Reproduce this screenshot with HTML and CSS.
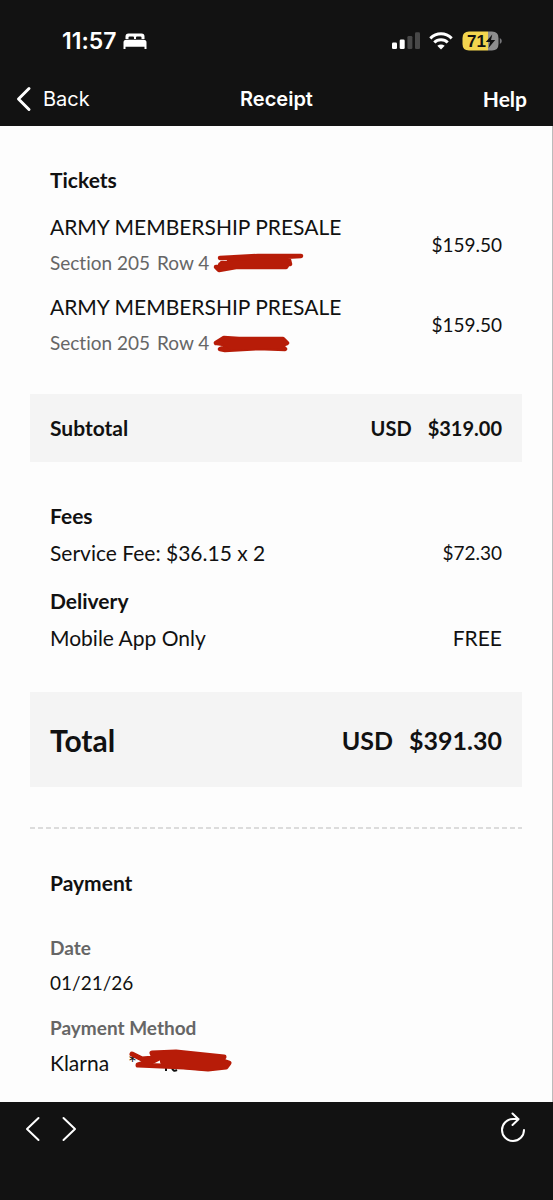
FILE: index.html
```
<!DOCTYPE html>
<html lang="en">
<head>
<meta charset="utf-8">
<meta name="viewport" content="width=device-width, initial-scale=1">
<title>Receipt</title>
<link rel="stylesheet" href="styles.css">
</head>
<body>
<header class="top">
  <div class="status">
    <div class="status-left">
      <span class="clock">11:57</span>
      <svg width="24" height="18" viewBox="0 0 24 18" fill="#fff" aria-hidden="true">
        <path d="M2.500 7V4.500Q2.500 1.500 5.500 1.500H18.500Q21.500 1.500 21.500 4.500V7H18.500V5.500Q18.500 4.500 17.500 4.500H14Q13 4.500 13 5.500V7H11V5.500Q11 4.500 10 4.500H6.500Q5.500 4.500 5.500 5.500V7Z"/>
        <path d="M.5 17V10.500Q.5 7.800 3.200 7.800H20.800Q23.500 7.800 23.500 10.500V17H21.500V14.800H2.500V17Z"/>
      </svg>
    </div>
    <div class="status-right">
      <svg width="28" height="18" viewBox="0 0 28 18" aria-hidden="true">
        <g fill="#fff"><rect y="10.500" width="5" height="6.500" rx="1.300"/><rect x="7.700" y="7.500" width="5" height="9.500" rx="1.300"/></g>
        <g fill="#484848"><rect x="15.400" y="4" width="5" height="13" rx="1.300"/><rect x="23" y=".3" width="5" height="16.700" rx="1.300"/></g>
      </svg>
      <svg width="24" height="18" viewBox="0 0 24 18" fill="none" stroke="#fff" stroke-width="3" aria-hidden="true">
        <path d="M1.300 6.300Q6 1.800 12 1.800T22.700 6.300"/>
        <path d="M5.300 10.500Q8 7.800 12 7.800T18.700 10.500"/>
        <path d="M8.300 13.800Q12 11 15.700 13.800L12 17.500Z" fill="#fff" stroke="none"/>
      </svg>
      <svg class="battery" width="40" height="20" viewBox="0 0 40 20" role="img" aria-label="Battery 71 percent, charging">
        <path d="M7 .5H26V19.500H7Q.5 19.500 .5 13V7Q.5 .5 7 .5Z" fill="#f3d54e"/>
        <path d="M26 .5H30Q36.500 .5 36.500 7V13Q36.500 19.500 30 19.500H26Z" fill="#8d8d8d"/>
        <path d="M37.800 7Q39.800 8 39.800 10T37.800 13Z" fill="#77777a"/>
        <text x="5" y="16">71</text>
        <path d="M30.300 3.500L23.800 11H28L26.500 17L33.200 9H29Z" fill="#111"/>
      </svg>
    </div>
  </div>
  <nav class="nav">
    <button class="back" type="button">
      <svg width="16" height="26" viewBox="0 0 16 26" fill="none" stroke="#fff" stroke-width="3" stroke-linecap="round" stroke-linejoin="round" aria-hidden="true"><path d="M13 2.500L2.500 13L13 23.500"/></svg>
      <span>Back</span>
    </button>
    <h1 class="title">Receipt</h1>
    <button class="help" type="button">Help</button>
  </nav>
</header>

<main class="receipt">
  <section class="block">
    <h2 class="heading">Tickets</h2>
    <ul class="tickets">
      <li class="ticket">
        <div class="ticket-info">
          <p>ARMY MEMBERSHIP PRESALE</p>
          <p class="seat"><span class="seat-text"><span>Section 205</span><span>Row 4</span></span>
            <svg width="92" height="22" viewBox="0 0 92 22" fill="none" stroke="#b71c08" stroke-width="4.500" stroke-linecap="round" stroke-linejoin="round" aria-hidden="true">
              <path d="M7 6L45 4L88 4L70 5L9 11L76 8L77 12L3 15L6 18L23 15H73L75 12L16 8"/>
              <path d="M8 13L70 8L73 13L20 13" stroke-width="6"/>
            </svg>
          </p>
        </div>
        <span class="amount">$159.50</span>
      </li>
      <li class="ticket">
        <div class="ticket-info">
          <p>ARMY MEMBERSHIP PRESALE</p>
          <p class="seat"><span class="seat-text"><span>Section 205</span><span>Row 4</span></span>
            <svg width="92" height="22" viewBox="0 0 92 22" fill="none" stroke="#b71c08" stroke-width="4.500" stroke-linecap="round" stroke-linejoin="round" aria-hidden="true">
              <path d="M3 11L11 6L26 7L70 7L74 11L68 13L72 17L45 16L12 18L7 17L18 13L4 11"/>
              <path d="M12 9H68V13L18 15L13 11H64" stroke-width="6"/>
            </svg>
          </p>
        </div>
        <span class="amount">$159.50</span>
      </li>
    </ul>
  </section>

  <div class="band">
    <span>Subtotal</span>
    <span class="money"><span>USD</span><span>$319.00</span></span>
  </div>

  <section class="block charges">
    <div>
      <h2 class="heading">Fees</h2>
      <p class="line"><span>Service Fee: $36.15 x 2</span><span class="amount">$72.30</span></p>
    </div>
    <div>
      <h2 class="heading">Delivery</h2>
      <p class="line"><span>Mobile App Only</span><span>FREE</span></p>
    </div>
  </section>

  <div class="band total">
    <span>Total</span>
    <span class="money"><span>USD</span><span>$391.30</span></span>
  </div>

  <svg class="divider" width="100%" height="2" aria-hidden="true"><line x1="0" y1="1" x2="100%" y2="1"/></svg>

  <section class="block">
    <h2 class="heading">Payment</h2>
    <dl class="payment">
      <div class="field">
        <dt>Date</dt>
        <dd class="amount">01/21/26</dd>
      </div>
      <div class="field">
        <dt>Payment Method</dt>
        <dd class="method"><span>Klarna</span>
          <span class="card"><span>*</span>
            <svg class="mark" width="106" height="26" viewBox="0 0 106 26" aria-hidden="true">
              <path d="M38 19V22M44 19Q45 23 49 21" fill="none" stroke="#111" stroke-width="2"/>
              <g fill="none" stroke="#b71c08" stroke-linecap="round" stroke-linejoin="round">
                <path d="M4 5L14 10L26 9L24 4L48 3L96 8L92 11L101 14L98 18L80 20L56 18L10 16L20 13" stroke-width="5"/>
                <path d="M20 13L32 7L52 7L92 11L96 15L80 18L56 16L36 12L80 12" stroke-width="8"/>
              </g>
            </svg>
          </span>
        </dd>
      </div>
    </dl>
  </section>
</main>

<footer class="toolbar">
  <div class="history">
    <button type="button" aria-label="Previous page"><svg width="16" height="26" viewBox="0 0 16 26"><path d="M13.500 2L2 13L13.500 24"/></svg></button>
    <button type="button" aria-label="Next page"><svg width="16" height="26" viewBox="0 0 16 26"><path d="M2.500 2L14 13L2.500 24"/></svg></button>
  </div>
  <button type="button" aria-label="Reload"><svg width="26" height="32" viewBox="0 0 26 32"><path d="M24 18A11 11 0 1 1 13 7H18.500M12.500 1.500L18.500 7.300L12.500 13"/></svg></button>
</footer>
</body>
</html>
```
FILE: styles.css
```
* {
  box-sizing: border-box;
}

body {
  margin: 0;
  min-height: 100vh;
  display: flex;
  flex-direction: column;
  background: #121212;
  color: #111;
  font-family: Lato, "Open Sans", sans-serif;
  font-size: 21px;
  line-height: 28px;
  font-variant-ligatures: none;
}

h1, h2, p, ul, dl, dd {
  margin: 0;
  padding: 0;
}

button {
  display: flex;
  align-items: center;
  padding: 0;
  border: 0;
  background: none;
  color: #fff;
  font: inherit;
  cursor: pointer;
}

svg {
  flex: none;
}

.top {
  color: #fff;
  font-family: Inter, sans-serif;
}

.status {
  display: flex;
  justify-content: space-between;
  align-items: center;
  height: 72px;
  padding: 10px 51px 0 62px;
}

.status-left,
.status-right {
  display: flex;
  align-items: center;
}

.status-left {
  gap: 6px;
}

.status-right {
  gap: 9px;
}

.clock {
  font-size: 23px;
  font-weight: 600;
}

.battery text {
  font: 700 17px "Liberation Sans", sans-serif;
  fill: #111;
}

.nav {
  display: grid;
  grid-template-columns: 1fr auto 1fr;
  align-items: center;
  height: 54px;
  padding: 0 26px 0 16px;
}

.nav > :first-child {
  justify-self: start;
}

.back {
  gap: 11px;
  font-size: 20px;
}

.title {
  padding-left: 10px;
  font-size: 20px;
  font-weight: 600;
}

.help {
  justify-self: end;
  font-family: Lato, sans-serif;
  font-weight: 700;
}

.receipt {
  flex: 1;
  padding: 40px 30px 21px;
  border-right: 1px solid #bbb;
  background: #fdfdfd;
}

.block {
  padding: 0 20px;
}

.heading {
  font-size: 21px;
  font-weight: 700;
}

.tickets {
  display: grid;
  gap: 16px;
  margin-top: 19px;
  list-style: none;
}

.ticket,
.line,
.band {
  display: flex;
  justify-content: space-between;
  align-items: center;
}

.ticket-info {
  display: grid;
  gap: 8px;
}

.amount {
  font-size: 19px;
}

.seat {
  display: flex;
  align-items: center;
  gap: 4px;
  color: #666;
  font-size: 19px;
}

.seat-text {
  display: flex;
  gap: 7px;
}

.band {
  min-height: 68px;
  margin: 37px 0 40px;
  padding: 0 20px;
  background: #f4f4f4;
  font-weight: 700;
}

.money {
  display: flex;
  gap: 16px;
  font-size: 20px;
}

.charges {
  display: grid;
  gap: 20px;
}

.line {
  margin-top: 9px;
}

.total {
  min-height: 95px;
  margin-top: 40px;
  font-size: 30px;
}

.total .money {
  font-size: 25px;
}

.divider {
  display: block;
  stroke: #bbb;
  stroke-dasharray: 5 3;
}

.divider + .block {
  margin-top: 40px;
}

.payment {
  display: grid;
  gap: 17px;
  margin-top: 37px;
}

.field {
  display: grid;
  gap: 7px;
}

dt {
  color: #666;
  font-size: 19px;
  font-weight: 700;
}

.method {
  display: flex;
  align-items: center;
  gap: 19px;
}

.card {
  position: relative;
}

.mark {
  position: absolute;
  left: 0;
  top: 0;
}

.toolbar {
  display: flex;
  justify-content: space-between;
  align-items: flex-start;
  min-height: 98px;
  padding: 10px 27px 0 25px;
}

.toolbar svg {
  fill: none;
  stroke: #fff;
  stroke-width: 2;
  stroke-linecap: round;
  stroke-linejoin: round;
}

.history {
  display: flex;
  gap: 20px;
  padding-top: 4px;
}
```
